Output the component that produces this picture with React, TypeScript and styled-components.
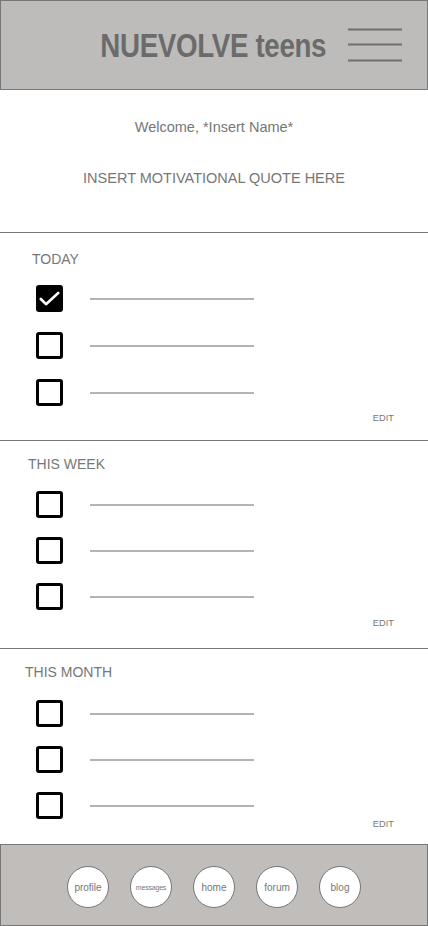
import React from 'react'
import styled, { createGlobalStyle } from 'styled-components'

const GlobalStyle = createGlobalStyle`
  html, body {
    margin: 0;
    padding: 0;
    background: #ffffff;
  }
  body {
    font-family: 'Liberation Sans', Arial, sans-serif;
  }
  * {
    box-sizing: border-box;
  }
`

const Page = styled.div`
  width: 428px;
  height: 926px;
  display: flex;
  flex-direction: column;
  background: #fff;
  overflow: hidden;
`

const Header = styled.header`
  height: 90px;
  flex: none;
  display: flex;
  align-items: center;
  justify-content: flex-end;
  gap: 22px;
  padding-right: 25px;
  background: #bdbcba;
  border: 1px solid #777;
`

// no condensed face installed, so squeeze the bold sans horizontally
const Title = styled.h1`
  margin: 0;
  font-family: 'Liberation Sans', Arial, sans-serif;
  font-weight: 700;
  font-size: 34px;
  line-height: 36px;
  letter-spacing: -0.4px;
  color: #6b6b6b;
  transform: scaleX(0.815);
  transform-origin: right center;
`

const MenuButton = styled.button`
  width: 54px;
  height: 34px;
  padding: 0;
  border: 0;
  background: none;
  display: block;
`

const Intro = styled.section`
  height: 143px;
  flex: none;
  padding-top: 28px;
  border-bottom: 1px solid #777;
  text-align: center;
  color: #777;
  font-size: 14.5px;
  line-height: 18px;
`

const Welcome = styled.p`
  margin: 0;
`

const Quote = styled.p`
  margin: 33px 0 0;
`

const Section = styled.section<{ $pt: number; $h: number; $last?: boolean }>`
  height: ${(p) => p.$h}px;
  flex: none;
  padding-top: ${(p) => p.$pt}px;
  border-bottom: ${(p) => (p.$last ? 'none' : '1px solid #777')};
  display: flex;
  flex-direction: column;
`

const Label = styled.h2<{ $indent: number }>`
  margin: 0;
  padding-left: ${(p) => p.$indent}px;
  font-size: 14px;
  line-height: 16px;
  font-weight: 400;
  color: #777;
`

const List = styled.ul<{ $mt: number; $gap: number }>`
  list-style: none;
  margin: ${(p) => p.$mt}px 0 0;
  padding: 0 0 0 36px;
  display: flex;
  flex-direction: column;
  gap: ${(p) => p.$gap}px;
`

const Row = styled.li`
  height: 27px;
  display: flex;
  align-items: center;
  gap: 27px;
`

const Box = styled.span<{ $checked?: boolean }>`
  width: 27px;
  height: 27px;
  flex: none;
  border: 3px solid #000;
  border-radius: 3px;
  background: ${(p) => (p.$checked ? '#000' : '#fff')};
  display: flex;
  align-items: center;
  justify-content: center;
`

const Line = styled.span`
  width: 164px;
  height: 2px;
  background: #b3b3b3;
`

const Edit = styled.span<{ $mt: number }>`
  margin-top: ${(p) => p.$mt}px;
  align-self: flex-end;
  padding-right: 34px;
  font-size: 9.3px;
  line-height: 12px;
  color: #777;
`

const Footer = styled.nav`
  flex: 1;
  display: flex;
  justify-content: center;
  align-items: flex-start;
  gap: 21px;
  padding-top: 21px;
  background: #c1bdbb;
  border: 1px solid #777;
`

const NavCircle = styled.a<{ $small?: boolean }>`
  width: 42px;
  height: 42px;
  border-radius: 50%;
  border: 1px solid #777;
  background: #fff;
  display: flex;
  align-items: center;
  justify-content: center;
  font-size: ${(p) => (p.$small ? '7px' : '10px')};
  color: #777;
  text-decoration: none;
  letter-spacing: ${(p) => (p.$small ? '-0.2px' : '0')};
`

const Hamburger = () => (
  <svg width="54" height="34" viewBox="0 0 54 34">
    <g stroke="#6e6e6e" strokeWidth="2.2">
      <line x1="0" y1="1.5" x2="54" y2="1.5" />
      <line x1="0" y1="16.5" x2="54" y2="16.5" />
      <line x1="0" y1="32.5" x2="54" y2="32.5" />
    </g>
  </svg>
)

const Check = () => (
  <svg width="21" height="16" viewBox="0 0 21 16">
    <path d="M1.8 8 L7 13.2 L19.2 2" fill="none" stroke="#fff" strokeWidth="2.6" strokeLinecap="round" strokeLinejoin="round" />
  </svg>
)

type Goal = { checked?: boolean }

type GoalSectionProps = {
  title: string
  indent: number
  pt: number
  h: number
  mt: number
  gap: number
  editMt: number
  goals: Goal[]
  last?: boolean
}

const GoalSection = ({ title, indent, pt, h, mt, gap, editMt, goals, last }: GoalSectionProps) => (
  <Section $pt={pt} $h={h} $last={last}>
    <Label $indent={indent}>{title}</Label>
    <List $mt={mt} $gap={gap}>
      {goals.map((g, i) => (
        <Row key={i}>
          <Box $checked={g.checked}>{g.checked && <Check />}</Box>
          <Line />
        </Row>
      ))}
    </List>
    <Edit $mt={editMt}>EDIT</Edit>
  </Section>
)

const navItems = ['profile', 'messages', 'home', 'forum', 'blog']

export default function App() {
  return (
    <>
      <GlobalStyle />
      <Page>
        <Header>
          <Title>NUEVOLVE teens</Title>
          <MenuButton aria-label="menu">
            <Hamburger />
          </MenuButton>
        </Header>

        <Intro>
          <Welcome>Welcome, *Insert Name*</Welcome>
          <Quote>INSERT MOTIVATIONAL QUOTE HERE</Quote>
        </Intro>

        <GoalSection
          title="TODAY"
          indent={32}
          pt={18}
          h={208}
          mt={18}
          gap={20}
          editMt={6}
          goals={[{ checked: true }, {}, {}]}
        />
        <GoalSection
          title="THIS WEEK"
          indent={28}
          pt={15}
          h={208}
          mt={19}
          gap={19}
          editMt={7}
          goals={[{}, {}, {}]}
        />
        <GoalSection
          title="THIS MONTH"
          indent={25}
          pt={15}
          h={195}
          mt={20}
          gap={19}
          editMt={-1}
          goals={[{}, {}, {}]}
          last
        />

        <Footer>
          {navItems.map((n) => (
            <NavCircle key={n} href="#" $small={n === 'messages'}>
              {n}
            </NavCircle>
          ))}
        </Footer>
      </Page>
    </>
  )
}
